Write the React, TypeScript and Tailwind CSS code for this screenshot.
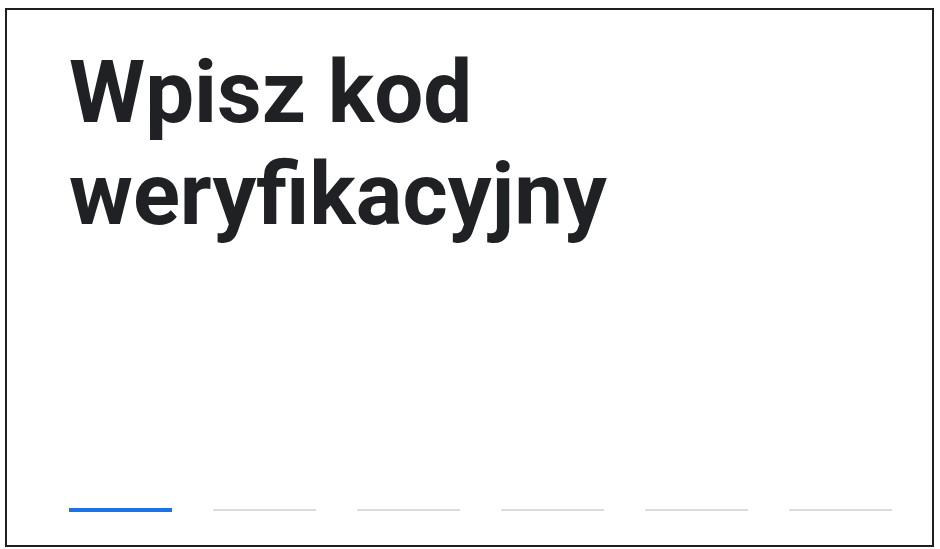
import React from "react";

export default function App() {
  const segs = [0, 1, 2, 3, 4, 5];
  return (
    <div className="w-[940px] h-[549px] bg-white pt-[8px] pl-[5px]">
      <div className="w-[929px] h-[539px] border-2 border-[#1f1f1f] flex flex-col pl-[62px] pr-[38px]" style={{ fontFamily: "Roboto, 'Noto Sans', sans-serif" }}>
        <h1 className="mt-[31px] text-[87px] leading-[102px] font-bold text-[#202124] tracking-[0px]">
          Wpisz kod
          <br />
          weryfikacyjny
        </h1>
        <div className="mt-auto mb-[33px] flex gap-[41px] items-center">
          {segs.map((i) => (
            <div
              key={i}
              className={i === 0 ? "w-[103px] h-[4px] bg-[#1a73e8]" : "w-[103px] h-[2px] bg-[#dadce0]"}
            />
          ))}
        </div>
      </div>
    </div>
  );
}
